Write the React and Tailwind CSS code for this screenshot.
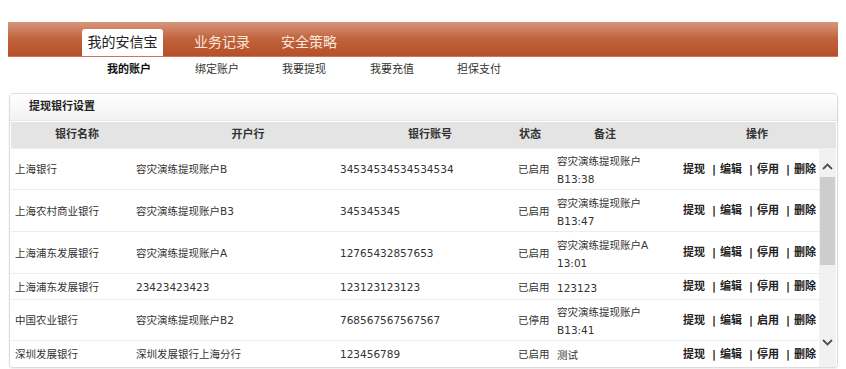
import React from "react";

const rows = [
  { name: "上海银行", branch: "容灾演练提现账户B", acct: "34534534534534534", status: "已启用", note: ["容灾演练提现账户", "B13:38"], toggle: "停用", h: "h-[41px]" },
  { name: "上海农村商业银行", branch: "容灾演练提现账户B3", acct: "345345345", status: "已启用", note: ["容灾演练提现账户", "B13:47"], toggle: "停用", h: "h-[42px]" },
  { name: "上海浦东发展银行", branch: "容灾演练提现账户A", acct: "12765432857653", status: "已启用", note: ["容灾演练提现账户A", "13:01"], toggle: "停用", h: "h-[42px]" },
  { name: "上海浦东发展银行", branch: "23423423423", acct: "123123123123", status: "已启用", note: ["123123"], toggle: "停用", h: "h-[26px]" },
  { name: "中国农业银行", branch: "容灾演练提现账户B2", acct: "768567567567567", status: "已停用", note: ["容灾演练提现账户", "B13:41"], toggle: "启用", h: "h-[41px]" },
  { name: "深圳发展银行", branch: "深圳发展银行上海分行", acct: "123456789", status: "已启用", note: ["测试"], toggle: "停用", h: "h-[27px]" },
];

const font = { fontFamily: '"DejaVu Sans", "Noto Sans CJK SC", sans-serif' };

const Ops = ({ toggle }) => (
  <div className="flex items-center font-bold text-[11px] text-[#222]">
    <span>提现</span>
    <span className="ml-[7px]">|</span>
    <span className="ml-[4px]">编辑</span>
    <span className="ml-[7px]">|</span>
    <span className="ml-[4px]">{toggle}</span>
    <span className="ml-[7px]">|</span>
    <span className="ml-[4px]">删除</span>
  </div>
);

const App = () => {
  return (
    <div className="w-[846px] h-[369px] bg-white overflow-hidden pt-[22px]" style={font}>
      {/* top tabs */}
      <div className="mx-[8px] h-[35px] bg-gradient-to-b from-[#d4977c] via-[#c0623b] to-[#b4502a] flex items-end pl-[74px] border-b border-[#c9775a]">
        <div className="w-[81px] h-[27px] bg-white rounded-t-[3px] flex items-center justify-center text-[14px] text-[#222]">
          我的安信宝
        </div>
        <div className="h-[27px] flex items-center ml-[31px] text-[14px] text-[#fbe6da]">业务记录</div>
        <div className="h-[27px] flex items-center ml-[31px] text-[14px] text-[#fbe6da]">安全策略</div>
      </div>

      {/* sub nav */}
      <div className="h-[27px] flex items-center pl-[107px] text-[11px] text-[#333]">
        <span className="w-[88px] font-bold text-[#111]">我的账户</span>
        <span className="w-[87px]">绑定账户</span>
        <span className="w-[88px]">我要提现</span>
        <span className="w-[87px]">我要充值</span>
        <span>担保支付</span>
      </div>

      {/* panel */}
      <div className="mt-[9px] ml-[9px] w-[829px] h-[275px] border border-[#dcdcdc] rounded-[4px] shadow-[0_1px_2px_rgba(0,0,0,0.08)] overflow-hidden">
        <div className="h-[27px] flex items-center pl-[19px] bg-gradient-to-b from-white to-[#f2f2f2] border-b border-[#e6e6e6] text-[11px] font-bold text-[#222]">
          提现银行设置
        </div>

        <div className="px-[1px] pt-[1px]">
          {/* header */}
          <div className="h-[26px] bg-[#e4e4e4] flex items-center text-[11px] font-bold text-[#333]">
            <div className="w-[132px] text-center">银行名称</div>
            <div className="w-[210px] text-center">开户行</div>
            <div className="w-[154px] text-center">银行账号</div>
            <div className="w-[46px] text-center">状态</div>
            <div className="w-[104px] text-center">备注</div>
            <div className="ml-[21px] w-[158px] text-center">操作</div>
          </div>

          {/* body */}
          <div className="flex">
            <div className="w-[809px]">
              {rows.map((r, i) => (
                <div key={i} className={`${r.h} flex items-center border-t border-[#ececec] text-[10.5px] text-[#333] pt-[2px]`}>
                  <div className="w-[125px] pl-[4px]">{r.name}</div>
                  <div className="w-[204px]">{r.branch}</div>
                  <div className="w-[178px]">{r.acct}</div>
                  <div className="w-[39px]">{r.status}</div>
                  <div className="w-[126px] leading-[18px]">
                    {r.note.map((n, j) => (
                      <div key={j}>{n}</div>
                    ))}
                  </div>
                  <Ops toggle={r.toggle} />
                </div>
              ))}
            </div>
            {/* scrollbar */}
            <div className="w-[17px] bg-[#f1f1f1] flex flex-col items-center pt-[15px]">
              <svg width="11" height="7" viewBox="0 0 11 7">
                <path d="M1 6 L5.5 1.5 L10 6" stroke="#505050" strokeWidth="1.8" fill="none" />
              </svg>
              <div className="mt-[7px] w-[15px] h-[88px] bg-[#cdcdcd]" />
              <svg className="mt-[74px]" width="11" height="7" viewBox="0 0 11 7">
                <path d="M1 1 L5.5 5.5 L10 1" stroke="#505050" strokeWidth="1.8" fill="none" />
              </svg>
            </div>
          </div>
        </div>
      </div>
    </div>
  );
};

export default App;
